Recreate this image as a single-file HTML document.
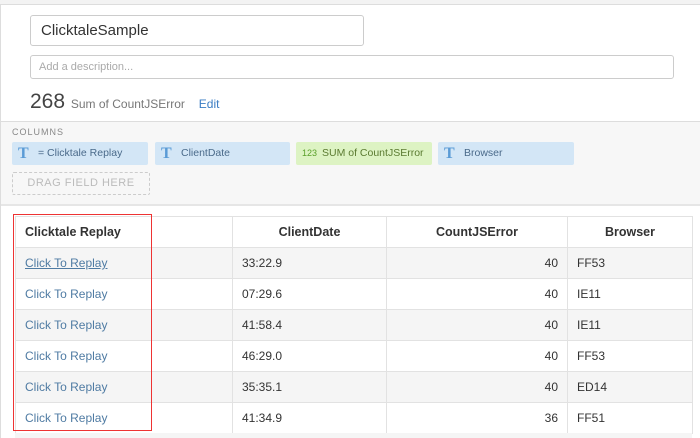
<!DOCTYPE html><html><head><style>
html,body{margin:0;width:700px;height:438px;overflow:hidden}
body{background:#fff;font-family:"Liberation Sans",sans-serif;position:relative}
.a{position:absolute}
.chip{position:absolute;top:142px;height:23px;background:#d3e6f6;border-radius:2px;font-size:10.5px;color:#4a6a8a;line-height:23px}
.chip b{font-family:"Liberation Serif",serif;color:#5a9bd5;font-size:16px;position:absolute;left:6px;top:0}
.chip span{position:absolute;left:26px}
table{position:absolute;left:15px;top:216px;border-collapse:collapse;font-size:12px;color:#333}
td,th{border:1px solid #e2e2e2;height:30px;padding:0 9px}
th{font-size:12.5px;background:#fff}
tr:nth-child(even) td{background:#f5f5f5}
a{color:#4f7ba3;text-decoration:none}
</style></head><body>
<div class="a" style="left:0;top:0;width:700px;height:4px;background:#f3f3f3;border-bottom:1px solid #ddd"></div>
<div class="a" style="left:0;top:4px;width:1px;height:434px;background:#ddd"></div>
<div class="a" style="left:30px;top:15px;width:332px;height:29px;border:1px solid #ccc;border-radius:3px;font-size:15px;line-height:29px;text-indent:10px;color:#333">ClicktaleSample</div>
<div class="a" style="left:30px;top:55px;width:642px;height:22px;border:1px solid #ccc;border-radius:3px;font-size:11px;line-height:22px;text-indent:8px;color:#aaa">Add a description...</div>
<div class="a" style="left:30px;top:90px;font-size:21px;color:#444">268 <span style="font-size:12px;color:#777">Sum of CountJSError</span> <span style="font-size:12px;color:#3a7cc3;margin-left:8px">Edit</span></div>
<div class="a" style="left:1px;top:121px;width:699px;height:82px;background:#f7f7f7;border-top:1px solid #ddd;border-bottom:2px solid #e6e6e6"></div>
<div class="a" style="left:12px;top:127px;font-size:9px;letter-spacing:1px;color:#888">COLUMNS</div>
<div class="chip" style="left:12px;width:136px"><b>T</b><span>= Clicktale Replay</span></div>
<div class="chip" style="left:155px;width:135px"><b>T</b><span>ClientDate</span></div>
<div class="chip" style="left:296px;width:136px;background:#ddf3c3;color:#5a7a30"><span style="left:6px;font-size:9px;color:#5aa02a">123</span><span>SUM of CountJSError</span></div>
<div class="chip" style="left:438px;width:136px"><b>T</b><span>Browser</span></div>
<div class="a" style="left:12px;top:172px;width:136px;height:21px;border:1px dashed #ccc;border-radius:2px;font-size:11px;color:#bbb;text-align:center;line-height:21px;letter-spacing:.5px">DRAG FIELD HERE</div>
<table>
<tr><th style="width:198px;text-align:left">Clicktale Replay</th><th style="width:135px">ClientDate</th><th style="width:162px">CountJSError</th><th style="width:106px">Browser</th></tr>
<tr><td><a style="text-decoration:underline">Click To Replay</a></td><td>33:22.9</td><td align="right">40</td><td>FF53</td></tr>
<tr><td><a>Click To Replay</a></td><td>07:29.6</td><td align="right">40</td><td>IE11</td></tr>
<tr><td><a>Click To Replay</a></td><td>41:58.4</td><td align="right">40</td><td>IE11</td></tr>
<tr><td><a>Click To Replay</a></td><td>46:29.0</td><td align="right">40</td><td>FF53</td></tr>
<tr><td><a>Click To Replay</a></td><td>35:35.1</td><td align="right">40</td><td>ED14</td></tr>
<tr><td><a>Click To Replay</a></td><td>41:34.9</td><td align="right">36</td><td>FF51</td></tr>
</table>
<div class="a" style="left:15px;top:433px;width:677px;height:5px;background:#f5f5f5"></div>
<div class="a" style="left:13px;top:214px;width:137px;height:215px;border:1px solid #e33"></div>
</body></html>
